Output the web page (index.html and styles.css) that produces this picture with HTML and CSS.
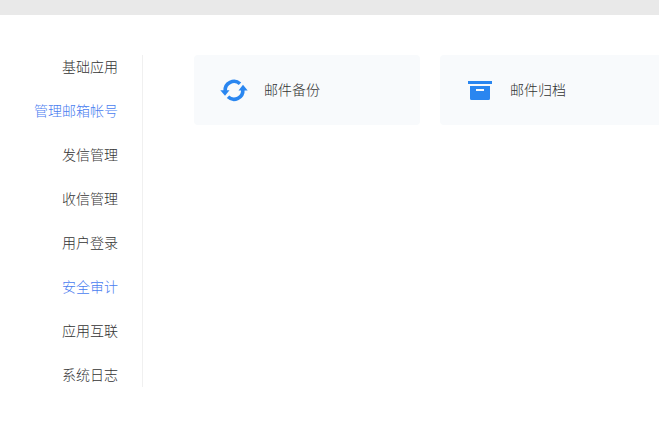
FILE: index.html
```html
<!DOCTYPE html>
<html lang="zh-CN">
<head>
    <meta charset="UTF-8">
    <meta name="viewport" content="width=device-width, initial-scale=1.0">
    <title>安全审计</title>
    <link rel="stylesheet" href="styles.css">
</head>
<body>

    <div class="top-bar"></div>

    <div class="container">
        <!-- Side menu -->
        <nav class="side-menu">
            <a href="#">基础应用</a>
            <a href="#" class="active">管理邮箱帐号</a>
            <a href="#">发信管理</a>
            <a href="#">收信管理</a>
            <a href="#">用户登录</a>
            <a href="#" class="active">安全审计</a>
            <a href="#">应用互联</a>
            <a href="#">系统日志</a>
        </nav>

        <!-- Apps -->
        <main class="app-list">
            <a href="#" class="app-card">
                <svg class="app-icon" viewBox="0 0 28 28" aria-hidden="true">
                    <path d="M5.2 15A8.8 8.8 0 0 1 20 7.8" fill="none" stroke="#2a86f0" stroke-width="3.6"/>
                    <path d="M22.8 13.6A8.8 8.8 0 0 1 8 20.8" fill="none" stroke="#2a86f0" stroke-width="3.6"/>
                    <path d="M.3 14.2h9.2L5 19.8z" fill="#2a86f0"/>
                    <path d="M27.7 14.4h-9.2L23 8.8z" fill="#2a86f0"/>
                </svg>
                <span>邮件备份</span>
            </a>
            <a href="#" class="app-card">
                <svg class="app-icon" viewBox="0 0 28 28" aria-hidden="true">
                    <path d="M2 5h24v3H2z" fill="#2a86f0"/>
                    <path fill-rule="evenodd" d="M4 10h20v12.5a1.5 1.5 0 0 1-1.5 1.5h-17a1.5 1.5 0 0 1-1.5-1.5zM10 13v2h8v-2z" fill="#2a86f0"/>
                </svg>
                <span>邮件归档</span>
            </a>
        </main>
    </div>

</body>
</html>
```
FILE: styles.css
```css
body {
    margin: 0;
    background-color: #fff;
    color: #333;
    font-family: "Noto Sans CJK SC", sans-serif;
    font-size: 14px;
    font-weight: 300;
    line-height: 22px;
}

a {
    color: inherit;
    text-decoration: none;
}

.top-bar {
    height: 15px;
    background-color: #e9e9e9;
}

.container {
    display: flex;
    align-items: flex-start;
    padding-top: 40px;
    overflow: hidden;
}

.side-menu {
    display: flex;
    flex-direction: column;
    flex-shrink: 0;
    gap: 22px;
    box-sizing: border-box;
    width: 143px;
    padding-right: 24px;
    padding-bottom: 2px;
    border-right: 1px solid #f0f0f0;
    text-align: right;
}

.side-menu a:hover,
.side-menu .active {
    color: #4a7df0;
}

.app-list {
    display: flex;
    gap: 20px;
    margin-left: 51px;
}

.app-card {
    display: flex;
    flex-shrink: 0;
    align-items: center;
    gap: 16px;
    box-sizing: border-box;
    width: 226px;
    height: 70px;
    padding: 0 26px;
    border-radius: 4px;
    background-color: #f8fafc;
}

.app-card span {
    padding-bottom: 2px;
}

.app-icon {
    width: 28px;
    height: 28px;
}
```
